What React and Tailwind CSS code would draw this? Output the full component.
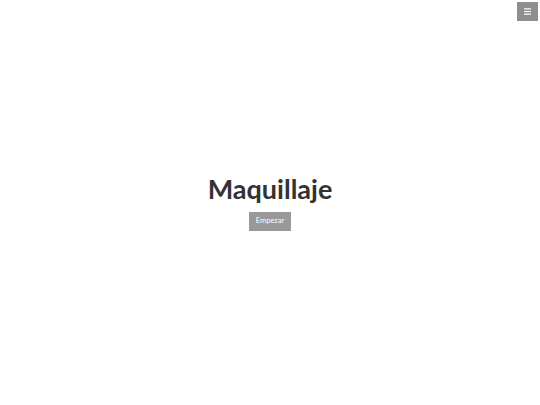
import { Menu } from 'lucide-react';

const App = () => {
  return (
    <div className="relative flex h-[405px] w-full flex-col items-center justify-center bg-white font-['Lato',sans-serif]">
      <button className="absolute right-[2px] top-[2px] flex h-[19px] w-[21px] items-center justify-center bg-[#8e8e8e]">
        <Menu className="h-[9px] w-[9px] text-white" strokeWidth={3} />
      </button>

      <h1 className="text-[27px] font-bold leading-none text-[#333333]">Maquillaje</h1>
      <button className="mt-[10px] flex h-[19px] w-[42px] items-center justify-center bg-[#999999] text-[7.5px] text-white">
        Empezar
      </button>
    </div>
  );
};

export default App;
